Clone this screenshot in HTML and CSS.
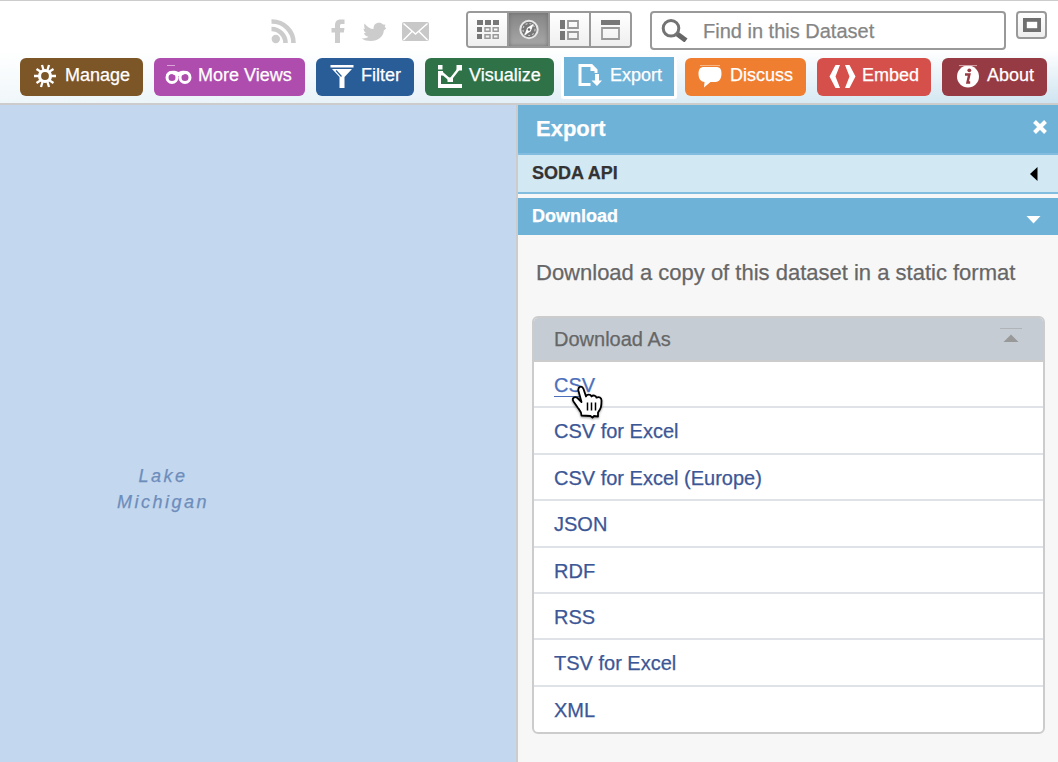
FILE: index.html
```html
<!DOCTYPE html>
<html lang="en">
<head>
<meta charset="utf-8">
<title>Export dataset</title>
<link rel="stylesheet" href="styles.css">
</head>
<body>
<div class="page">
  <header class="header">
    <div class="toolbar">
      <div class="social">
        <svg class="rss" width="26" height="26" viewBox="0 0 26 26"><circle cx="4.800" cy="21" r="4.200" fill="#ccc"/><path d="M0.500 11A14 14 0 0 1 14.500 25M0.500 3.500A21.500 21.500 0 0 1 22.500 25" fill="none" stroke="#ccc" stroke-width="4.600"/></svg>
        <svg class="facebook" width="14" height="24" viewBox="0 0 14 24"><path d="M4 24V13.500H.5V9H4V6.500C4 2.500 6 .5 9.500 .5h4V5h-2.500C9.500 5 9 5.500 9 7v2h4.500l-.7 4.500H9V24z" fill="#ccc"/></svg>
        <svg class="twitter" width="26" height="20" viewBox="0 0 26 20"><path d="M3.500 1.500C6 5 9.500 7 12.500 7C12.500 3 14.500 .8 18 .8c1.800 0 3 .5 4 1.700l2.500.2-.8 2 1.500 1.800-2.400 2C22.500 14.500 17 19 10 19c-4 0-7-.8-9.500-2.500 3 .2 5.500-.5 7-1.700-2.500-.5-4-1.800-4.600-3.600l2-.4C3.500 9.800 2.500 8.300 2.500 6.500l1.600.4C3 5.500 3 3 3.500 1.500z" fill="#ccc"/></svg>
        <svg class="mail" width="27" height="19" viewBox="0 0 27 19"><rect width="27" height="19" rx="2" fill="#c8c8c8"/><path d="M1.500 1.500L13.500 12 25.500 1.500M1.500 18l8.500-8.500M25.500 18L17 9.500" fill="none" stroke="#fff" stroke-width="1.500"/></svg>
      </div>
      <div class="views">
        <div class="view"><svg width="22" height="20" viewBox="0 0 22 20"><path d="M0 0h6v5H0zM8 0h6v5H8zM16 0h6v5h-6zM0 7h5v5H0zM0 14h5v5H0z" fill="#777"/><path d="M8 7.800h5v3.500H8zM16.200 7.800h5v3.500h-5zM8 14.800h5v3.500H8zM16.200 14.800h5v3.500h-5z" fill="none" stroke="#999" stroke-width="1.500"/></svg></div>
        <div class="view active"><svg width="20" height="21" viewBox="0 0 20 21"><circle cx="10" cy="10.500" r="8.700" fill="#777" stroke="#e8e8e8" stroke-width="2"/><circle cx="10" cy="10.500" r="6" fill="none" stroke="#ccc" stroke-width="1.200" stroke-dasharray="2 2"/><path d="M14.800 4.500L11.800 12.200 5.200 16.500 8.200 8.800z" fill="#fff"/><circle cx="10" cy="10.500" r="1.300" fill="#666"/></svg></div>
        <div class="view"><svg width="19" height="20" viewBox="0 0 19 20"><path d="M0 0h5v9H0zM0 11h5v9H0z" fill="#777"/><path d="M8 1h10v7H8zM8 12h10v7H8z" fill="none" stroke="#999" stroke-width="1.800"/></svg></div>
        <div class="view"><svg width="19" height="20" viewBox="0 0 19 20"><path d="M0 0h19v5H0z" fill="#777"/><path d="M1 8h17v11H1z" fill="none" stroke="#999" stroke-width="1.800"/></svg></div>
      </div>
      <div class="search">
        <svg width="27" height="23" viewBox="0 0 27 23"><path d="M15.500 14.500L25 21.500" stroke="#666" stroke-width="5"/><circle cx="10" cy="9.300" r="7.800" fill="#fff" stroke="#737373" stroke-width="3"/></svg>
        <span>Find in this Dataset</span>
      </div>
      <div class="fullscreen"><svg width="18" height="14" viewBox="0 0 18 14"><rect x="1.900" y="1.900" width="14.200" height="10.200" fill="#fff" stroke="#707070" stroke-width="3.800"/></svg></div>
    </div>
    <nav class="tabs">
      <a class="tab manage"><svg width="24" height="24" viewBox="0 0 24 24"><circle cx="12" cy="12" r="5.500" fill="none" stroke="#fff" stroke-width="3.200"/><path d="M10.500 6L9 1M14.500 6L16 1M9.500 18L8 23M14.500 18L16 23M6 12H1M18 12h5M7.800 7.800L3.500 5M16.200 7.800L20.500 5M7.800 16.200L3.500 19M16.200 16.200l4.300 2.800" stroke="#fff" stroke-width="2.300"/></svg><span>Manage</span></a>
      <a class="tab more"><svg width="27" height="20" viewBox="0 0 27 20"><path d="M2 .5h8" stroke="#d9a4d8" stroke-width="1"/><path d="M1 10C2 6.500 6 5 11 6l2.500 1L16 6c5-1 9 .5 10 4l-5-1.500-6 2.500h-3L6 8.500z" fill="#fff"/><circle cx="7" cy="12.500" r="5" fill="none" stroke="#fff" stroke-width="3"/><circle cx="20" cy="12.500" r="5" fill="none" stroke="#fff" stroke-width="3"/></svg><span>More Views</span></a>
      <a class="tab filter"><svg width="24" height="23" viewBox="0 0 24 23"><path d="M.5 0h23v2.500H.5zM2 4h20l-7.500 8v11h-5V12z" fill="#fff"/><path d="M6 5.500l5.500 6" fill="none" stroke="#285d98" stroke-width="1.200"/></svg><span>Filter</span></a>
      <a class="tab visualize"><svg width="24" height="23" viewBox="0 0 24 23"><path d="M0 0h4.500v4.500H0zM0 6h5v4.500H3V19h21v4H0zM18.500 0H24v5.500h-5.500zM9.500 12.500h5.500V17H9.500z" fill="#fff"/><path d="M3.500 7.500L12 15 21 3.500" fill="none" stroke="#fff" stroke-width="2.400"/></svg><span>Visualize</span></a>
      <a class="tab export"><svg width="24" height="23" viewBox="0 0 24 23"><path d="M12.500 20.500H2V1.500h11.500l4.500 4.500V9" fill="none" stroke="#fff" stroke-width="3"/><path d="M12.500 1v6H18z" fill="#fff"/><path d="M17 10h4v6.500h3L19 22l-5.500-5.500H17z" fill="#fff"/></svg><span>Export</span></a>
      <a class="tab discuss"><svg width="24" height="23" viewBox="0 0 24 23"><path d="M2 .5h20" stroke="#f7b685" stroke-width="1"/><path d="M6 2h12c4 0 5.500 2 5.500 6.500S21.500 17 17.500 17H12.500L6 22.500 6.500 17C2.500 16.500 .5 13.500 .5 9S2 2 6 2z" fill="#fff"/></svg><span>Discuss</span></a>
      <a class="tab embed"><svg width="27" height="23" viewBox="0 0 27 23"><path d="M6.500 0H11L6.500 11.500 11 23H6.500L.5 11.500zM20.500 0H16l4.500 11.500L16 23h4.500l6-11.500z" fill="#fff"/></svg><span>Embed</span></a>
      <a class="tab about"><svg width="24" height="23" viewBox="0 0 24 23"><circle cx="12" cy="11.500" r="11" fill="#fff"/><path d="M3 .6h18" stroke="#d5a9ad" stroke-width="1"/><circle cx="13.300" cy="5.300" r="1.900" fill="#963a43"/><path d="M9 9.500h4.300l-1.800 8h2.700" fill="none" stroke="#963a43" stroke-width="2.500"/></svg><span>About</span></a>
    </nav>
  </header>
  <main class="content">
    <div class="map"><div class="lake">Lake<br>Michigan</div></div>
    <aside class="panel">
      <div class="panel-title"><h1>Export</h1><svg width="14" height="14" viewBox="0 0 14 14"><path d="M1.500 1.500l11 11M12.500 1.500l-11 11" stroke="#fff" stroke-width="4"/></svg></div>
      <div class="section soda"><h2>SODA API</h2><svg width="8" height="14" viewBox="0 0 8 14"><path d="M7.500 0v14L0 7z" fill="#000"/></svg></div>
      <div class="section download"><h2>Download</h2><svg width="15" height="8" viewBox="0 0 15 8"><path d="M.5 0h14L7.500 7.500z" fill="#fff"/></svg></div>
      <p class="intro">Download a copy of this dataset in a static format</p>
      <div class="formats">
        <div class="formats-head"><span>Download As</span><svg width="22" height="15" viewBox="0 0 22 15"><path d="M0 .5h22" stroke="#b0b3b7"/><path d="M11 6.500l7.500 7.500h-15z" fill="#999"/></svg></div>
        <ul class="format-list">
          <li class="current"><a>CSV</a>
            <svg class="pointer" width="36" height="40" viewBox="0 0 36 40"><path d="M12.500 33.500C12.500 30 11 28.500 9 26L4.500 19.500C2.500 16 5.500 14 8.500 16l4 4L9.500 9C8.500 4.500 13 3 14.500 7l2.500 7.500c1-2.500 4.500-2.500 5.500 0 1.500-1.800 4.500-1 5 1.200 2.500-1.500 5 0 5 2.800 0 6-.5 8-3.500 12v4l-4-.5-1.500 1.500-2-1.500z" fill="#fff" stroke="#000" stroke-width="1.800" stroke-linejoin="round"/><path d="M18.500 20.500v8M22.500 20.500v8M26.500 20.500v8" stroke="#000" stroke-width="1.500"/></svg>
          </li>
          <li><a>CSV for Excel</a></li>
          <li><a>CSV for Excel (Europe)</a></li>
          <li><a>JSON</a></li>
          <li><a>RDF</a></li>
          <li><a>RSS</a></li>
          <li><a>TSV for Excel</a></li>
          <li><a>XML</a></li>
        </ul>
      </div>
    </aside>
  </main>
</div>
</body>
</html>
```
FILE: styles.css
```css
* { box-sizing: border-box; }
body { margin: 0; font-family: "Liberation Sans", Arial, sans-serif; -webkit-text-stroke-width: 0.25px; }
svg { display: block; flex: none; }
h1, h2, p, ul { margin: 0; padding: 0; }
.page { width: 1058px; height: 762px; display: flex; flex-direction: column; overflow: hidden; }

.header { height: 105px; flex: none; border-top: 1px solid #ccc; border-bottom: 2px solid #ccc; background: linear-gradient(to bottom, #fff 48%, rgba(255,255,255,0) 100%), linear-gradient(to right, #f0f7fa, #e2eff6 50%, #cfe4f0); }
.toolbar { display: flex; align-items: flex-start; height: 56px; padding: 10px 11px 0 271px; }
.social { display: flex; width: 195px; }
.rss { margin-top: 7px; }
.facebook { margin: 8px 0 0 34px; }
.twitter { margin: 11px 0 0 16px; }
.mail { margin: 11px 0 0 15px; }
.views { display: flex; width: 166px; height: 37px; border: 2px solid #999; border-radius: 4px; overflow: hidden; }
.view { flex: 1; display: flex; align-items: center; justify-content: center; border-right: 2px solid #999; background: linear-gradient(#fff, #efefef); }
.view:last-child { border-right: 0; }
.view.active { background: linear-gradient(#858585, #a8a8a8); box-shadow: inset 0 0 4px #6f6f6f; }
.search { display: flex; align-items: center; width: 356px; height: 39px; margin-left: 18px; padding-left: 9px; border: 2px solid #999; border-radius: 4px; background: #fff; font-size: 20px; color: #858585; }
.search svg { margin-bottom: 1px; }
.search span { margin: 2px 0 0 15px; }
.fullscreen { display: flex; justify-content: center; width: 31px; height: 28px; margin-left: 10px; padding-top: 5px; border: 2px solid #999; border-radius: 4px; background: linear-gradient(#fff, #eee); }

.tabs { display: flex; align-items: flex-start; gap: 11px; padding: 1px 0 0 20px; }
.tab { display: flex; align-items: center; gap: 8px; height: 38px; border-radius: 6px; color: #fff; font-size: 18px; line-height: 20px; white-space: nowrap; }
.tab svg { margin-bottom: 2px; }
.tab span { margin-bottom: 4px; }
.manage { width: 123px; padding-left: 13px; background: #7d5628; }
.more { width: 151px; padding-left: 11px; gap: 6px; background: #ae4dae; }
.tab.more svg { margin-bottom: 4px; }
.filter { width: 98px; padding-left: 14px; gap: 7px; background: #285d98; }
.visualize { width: 129px; padding-left: 13px; gap: 7px; background: #2f7247; }
.export { width: 116px; height: 42px; margin: -1px -3px 0 -4px; padding-left: 14px; border: 3px solid #fff; border-top: 0; border-radius: 3px; background: #6eb2d8; background-clip: padding-box; }
.discuss { width: 121px; padding-left: 13px; background: #f07e30; }
.embed { width: 114px; padding-left: 12px; gap: 6px; background: #d5504b; }
.about { width: 105px; padding-left: 14px; gap: 7px; background: #963a43; }

.content { display: flex; flex: 1; min-height: 0; }
.map { width: 516px; padding: 358px 0 0 116px; background: #c3d7ee; }
.lake { width: 94px; text-align: center; color: #6d8dbb; font-size: 18px; font-style: italic; line-height: 26px; letter-spacing: 2.500px; }
.panel { width: 542px; border-left: 2px solid #ccc; background: #f7f7f7; }
.panel-title { display: flex; justify-content: space-between; height: 50px; padding: 11px 11px 0 18px; border-bottom: 2px solid #82bcde; background: #6eb2d8; color: #fff; }
.panel-title h1 { font-size: 22px; line-height: 26px; }
.panel-title svg { margin-top: 4px; }
.section { display: flex; justify-content: space-between; padding-left: 14px; }
.section h2 { font-size: 18px; line-height: 22px; }
.soda { height: 39px; padding-top: 7px; padding-right: 20px; border-bottom: 2px solid #82bcde; background: #d2e8f3; color: #333; }
.soda svg { margin-top: 5px; }
.download { height: 37px; margin-top: 4px; padding-top: 7px; padding-right: 17px; background: #6eb2d8; color: #fff; }
.download svg { margin-top: 11px; }
.intro { padding: 25px 0 0 18px; color: #666; font-size: 22px; line-height: 26px; white-space: nowrap; }
.formats { width: 513px; height: 418px; margin: 30px 0 0 14px; border: 2px solid #ccc; border-radius: 6px; background: #fff; overflow: hidden; font-size: 20px; }
.formats-head { display: flex; justify-content: space-between; height: 44px; padding: 10px 21px 0 20px; border-bottom: 2px solid #ccc; background: #c5ccd4; color: #666; line-height: 23px; }
.format-list { display: flex; flex-direction: column; height: 371px; list-style: none; }
.format-list li { flex: 1; position: relative; padding: 12px 0 0 20px; border-bottom: 2px solid #dfe2e6; color: #3c5796; line-height: 23px; }
.format-list li:last-child { border-bottom-color: transparent; }
.current a { display: inline-block; height: 23px; color: #4e70bb; border-bottom: 1px solid #4e70bb; }
.pointer { position: absolute; left: 35px; top: 20px; filter: drop-shadow(0 1px 1px rgba(0,0,0,.4)); }
```
